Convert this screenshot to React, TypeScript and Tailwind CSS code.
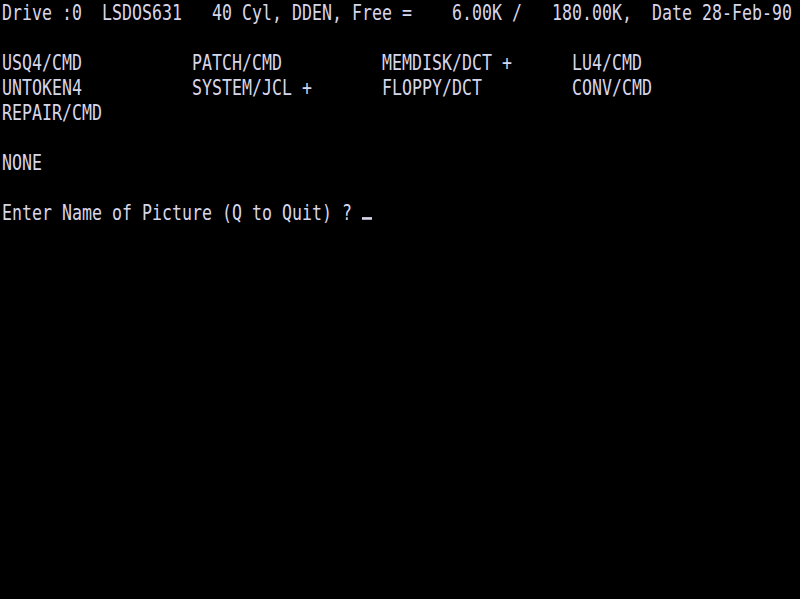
import React from "react";

const lines: string[] = [
  "Drive :0  LSDOS631   40 Cyl, DDEN, Free =    6.00K /   180.00K,  Date 28-Feb-90",
  "",
  "USQ4/CMD           PATCH/CMD          MEMDISK/DCT +      LU4/CMD",
  "UNTOKEN4           SYSTEM/JCL +       FLOPPY/DCT         CONV/CMD",
  "REPAIR/CMD",
  "",
  "NONE",
  "",
  "Enter Name of Picture (Q to Quit) ? ",
];

const App: React.FC = () => {
  return (
    <div className="w-[800px] h-[599px] bg-black overflow-hidden pl-[2px] text-[#d6d6ea] font-['DejaVu_Sans_Mono',monospace] text-[16.61px] slashed-zero">
      {lines.map((line, i) => (
        <div key={i} className="h-[25px] leading-[25px] whitespace-pre scale-y-[1.32]">
          {line}
          {i === lines.length - 1 && (
            <span className="inline-block align-top w-[10px] h-[25px] relative">
              <span className="absolute left-0 top-[16px] w-[10px] h-[2px] bg-[#d6d6ea]" />
            </span>
          )}
        </div>
      ))}
    </div>
  );
};

export default App;
